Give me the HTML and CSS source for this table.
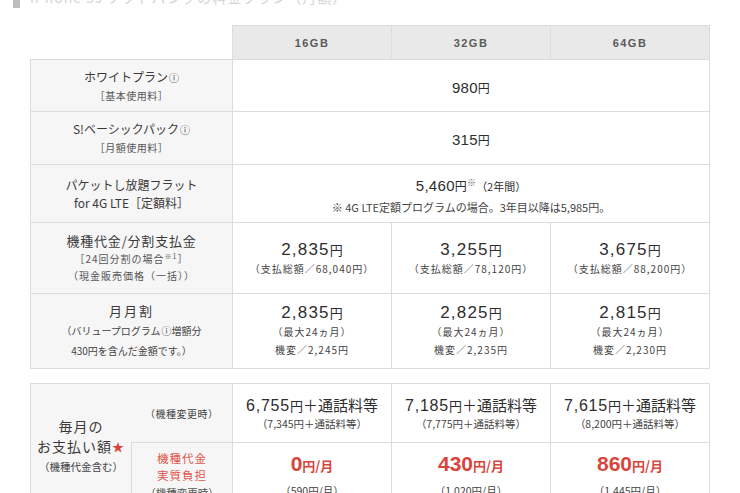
FILE: index.html
```html
<!DOCTYPE html>
<html lang="ja">
<head>
<meta charset="utf-8">
<title>料金プラン</title>
<link rel="stylesheet" href="styles.css">
</head>
<body>
<div class="page">
  <h2 class="heading"><span class="sq"></span><span class="ttl">iPhone 5s ソフトバンクの料金プラン（月額）</span></h2>

  <table class="plan">
    <colgroup><col class="c-label"><col class="c-val"><col class="c-val"><col class="c-val"></colgroup>
    <tr class="r-head">
      <th class="corner"></th>
      <th class="cap">16GB</th>
      <th class="cap">32GB</th>
      <th class="cap">64GB</th>
    </tr>
    <tr class="r1">
      <th class="label"><span class="l-main">ホワイトプラン<span class="info">ⓘ</span></span><span class="l-sub">［基本使用料］</span></th>
      <td colspan="3" class="val"><span class="n15">980<span class="yen">円</span></span></td>
    </tr>
    <tr class="r2">
      <th class="label"><span class="l-main">S!ベーシックパック<span class="info">ⓘ</span></span><span class="l-sub">［月額使用料］</span></th>
      <td colspan="3" class="val"><span class="n15">315<span class="yen">円</span></span></td>
    </tr>
    <tr class="r3">
      <th class="label"><span class="l-main">パケットし放題フラット</span><span class="l-main">for 4G LTE［定額料］</span></th>
      <td colspan="3" class="val">
        <span class="line1"><span class="n15">5,460<span class="yen">円</span></span><sup class="kome">※</sup><span class="paren">（2年間）</span></span>
        <span class="note">※ 4G LTE定額プログラムの場合。3年目以降は5,985円。</span>
      </td>
    </tr>
    <tr class="r4">
      <th class="label"><span class="l-big">機種代金/分割支払金</span><span class="l-sub">［24回分割の場合<sup class="ref">※1</sup>］</span><span class="l-sub">（現金販売価格（一括））</span></th>
      <td class="val"><span class="n17">2,835<span class="yen">円</span></span><span class="s10">（支払総額／68,040円）</span></td>
      <td class="val"><span class="n17">3,255<span class="yen">円</span></span><span class="s10">（支払総額／78,120円）</span></td>
      <td class="val"><span class="n17">3,675<span class="yen">円</span></span><span class="s10">（支払総額／88,200円）</span></td>
    </tr>
    <tr class="r5">
      <th class="label"><span class="l-big">月月割</span><span class="l-mid">（バリュープログラム<span class="info">ⓘ</span>増額分</span><span class="l-mid">430円を含んだ金額です。）</span></th>
      <td class="val"><span class="n17">2,835<span class="yen">円</span></span><span class="s10 ln">（最大24ヵ月）</span><span class="s10 ln">機変／2,245円</span></td>
      <td class="val"><span class="n17">2,825<span class="yen">円</span></span><span class="s10 ln">（最大24ヵ月）</span><span class="s10 ln">機変／2,235円</span></td>
      <td class="val"><span class="n17">2,815<span class="yen">円</span></span><span class="s10 ln">（最大24ヵ月）</span><span class="s10 ln">機変／2,230円</span></td>
    </tr>
  </table>

  <table class="pay">
    <colgroup><col class="c-half"><col class="c-half"><col class="c-val"><col class="c-val"><col class="c-val"></colgroup>
    <tr class="p1">
      <th class="label plabel" rowspan="2"><span class="p-main">毎月の</span><span class="p-main">お支払い額<span class="star">★</span></span><span class="p-sub">（機種代金含む）</span></th>
      <td class="sub sub-top">（機種変更時）</td>
      <td class="val"><span class="total"><span class="n16">6,755</span><span class="yen13">円</span>＋通話料等</span><span class="s105">（7,345円＋通話料等）</span></td>
      <td class="val"><span class="total"><span class="n16">7,185</span><span class="yen13">円</span>＋通話料等</span><span class="s105">（7,775円＋通話料等）</span></td>
      <td class="val"><span class="total"><span class="n16">7,615</span><span class="yen13">円</span>＋通話料等</span><span class="s105">（8,200円＋通話料等）</span></td>
    </tr>
    <tr class="p2">
      <td class="sub sub-red"><span class="rl">機種代金</span><span class="rl">実質負担</span><span class="rl rs">（機種変更時）</span></td>
      <td class="val"><span class="red-big"><span class="n21">0</span><span class="per">円/月</span></span><span class="s105">（590円/月）</span></td>
      <td class="val"><span class="red-big"><span class="n21">430</span><span class="per">円/月</span></span><span class="s105">（1,020円/月）</span></td>
      <td class="val"><span class="red-big"><span class="n21">860</span><span class="per">円/月</span></span><span class="s105">（1,445円/月）</span></td>
    </tr>
  </table>
</div>
</body>
</html>
```

FILE: styles.css
```css
* { box-sizing: border-box; }
html, body { margin: 0; padding: 0; background: #fff; }
body {
  font-family: "Noto Sans CJK JP", "Noto Sans", sans-serif;
  color: #333;
  overflow: hidden;
}
.page {
  width: 740px;
  padding: 0 31px 0 30px;
}
.heading {
  margin: -14px 0 0 -17px;
  height: 22px;
  display: flex;
  align-items: center;
  gap: 10px;
  font-size: 14px;
  font-weight: normal;
  color: #d4d4d4;
}
.sq {
  align-self: flex-end;
  width: 7px;
  height: 18px;
  background: #bdbdbd;
  display: block;
}
.ttl { letter-spacing: 1px; }

table {
  border-collapse: collapse;
  table-layout: fixed;
  width: 679px;
}
.plan { margin-top: 17px; }
.pay { margin-top: 14px; }
.c-label { width: 202px; }
.c-val { width: 159px; }
.c-half { width: 101px; }

th, td {
  border: 1px solid #dcdcdc;
  padding: 0;
  text-align: center;
  vertical-align: middle;
  font-weight: normal;
}
th.corner { border: none; background: transparent; }
th.cap {
  height: 34px;
  background: #e9e9e9;
  font-family: "Liberation Sans", sans-serif;
  font-weight: bold;
  font-size: 11px;
  letter-spacing: 1.5px;
  color: #5a5a5a;
}
.label { background: #f6f6f6; color: #3a3a3a; }

.r1 td, .r1 th { height: 52px; }
.r2 td, .r2 th { height: 53px; }
.r3 td, .r3 th { height: 58px; }
.r4 td, .r4 th { height: 71px; }
.r5 td, .r5 th { height: 75px; }

.l-main { display: block; font-size: 12px; line-height: 18px; }
.l-sub { display: block; font-size: 10px; line-height: 17px; color: #555; letter-spacing: 0.5px; }
.l-big { display: block; font-size: 13px; line-height: 18px; letter-spacing: 0.8px; }
.l-mid { display: block; font-size: 10px; line-height: 20px; color: #444; }
.r5 .l-big { line-height: 20px; letter-spacing: 2px; }
.r4 .l-sub { line-height: 17px; letter-spacing: 1px; }
.info { font-size: 10px; margin-left: 1px; }
sup.ref { font-size: 7px; vertical-align: 4px; line-height: 0; }

.val { color: #2e2e2e; }
.n15 {
  font-family: "Liberation Sans", sans-serif;
  font-size: 15px;
  letter-spacing: 0.3px;
}
.yen {
  font-family: "Noto Sans CJK JP", sans-serif;
  font-size: 12px;
}
.line1 { display: block; line-height: 24px; }
.kome { font-size: 9px; vertical-align: 5px; line-height: 0; color: #666; }
.paren { font-size: 11px; }
.note { display: block; font-size: 11px; line-height: 18px; color: #444; }

.n17 {
  display: block;
  font-family: "Liberation Sans", sans-serif;
  font-size: 17px;
  line-height: 22px;
  letter-spacing: 1.2px;
}
.n17 .yen { font-size: 13px; letter-spacing: 0; }
.s10 {
  display: block;
  font-size: 10px;
  line-height: 16px;
  letter-spacing: 1px;
  color: #444;
}
.r5 .n17 { line-height: 20px; }
.s10.ln { line-height: 18px; }

.plabel { vertical-align: middle; border-right: none; }
.p-main { display: block; font-size: 14px; line-height: 20px; letter-spacing: 1px; color: #3a3a3a; }
.p-sub { display: block; font-size: 10.5px; line-height: 19px; color: #444; }
.star { color: #d9453c; font-size: 12px; }
.sub { font-size: 10px; color: #444; background: #f6f6f6; letter-spacing: 0.5px; }
.sub-top { border-left: none; }
.p1 td, .p1 th { height: 59px; }
.p2 td { height: 66px; }
.sub-red { color: #e0564c; border-left: 1px solid #dcdcdc; }
.rl { display: block; font-size: 11.5px; line-height: 17px; letter-spacing: 1px; }
.rl.rs { font-size: 10.5px; letter-spacing: 0; color: #555; }

.total { display: block; font-size: 15px; line-height: 20px; color: #2e2e2e; }
.n16 {
  font-family: "Liberation Sans", sans-serif;
  font-size: 16px;
  letter-spacing: 0.8px;
}
.yen13 { font-size: 13px; }
.s105 { display: block; font-size: 10.5px; line-height: 16px; color: #444; }
.red-big { display: block; color: #d9453c; line-height: 28px; }
.n21 {
  font-family: "Liberation Sans", sans-serif;
  font-weight: bold;
  font-size: 21px;
}
.per { font-size: 13px; font-weight: bold; }
.p2 .s105 { line-height: 22px; }
```
